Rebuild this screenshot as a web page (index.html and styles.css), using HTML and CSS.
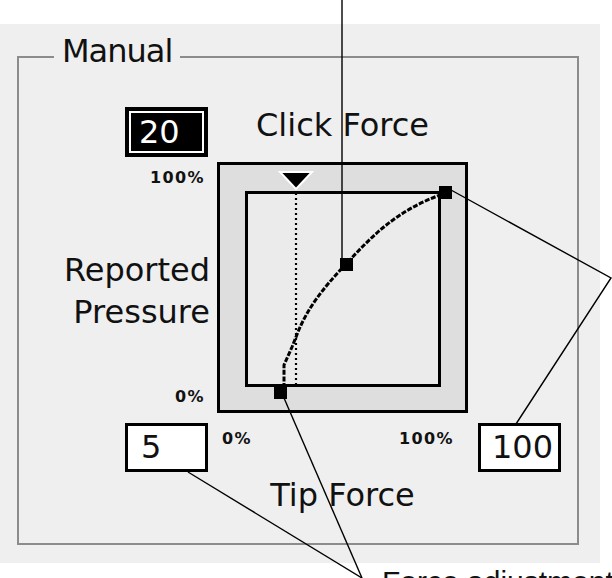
FILE: index.html
```html
<!DOCTYPE html>
<html lang="en">
<head>
<meta charset="utf-8">
<title>Tip Feel – Manual</title>
<link rel="stylesheet" href="styles.css">
</head>
<body>
<div class="panel">
  <fieldset class="group">
    <legend class="group-title">Manual</legend>
    <div class="layout">
      <div class="field field-click">20</div>
      <div class="axis-title axis-click">Click Force</div>

      <div class="y-axis">
        <span class="tick">100%</span>
        <span class="y-title">Reported<br>Pressure</span>
        <span class="tick">0%</span>
      </div>

      <svg class="graph" width="251" height="251" viewBox="0 0 251 251">
        <!-- outer well -->
        <rect x="1.5" y="1.5" width="248" height="248" fill="#dedede" stroke="#000" stroke-width="3"/>
        <!-- plot area -->
        <rect x="29.5" y="30.5" width="193" height="193" fill="#ebebeb" stroke="#000" stroke-width="3"/>
        <!-- click threshold marker -->
        <line x1="79" y1="31" x2="79" y2="223" stroke="#000" stroke-width="2.2" stroke-dasharray="2 3"/>
        <polygon points="63,10 95,10 79,27" fill="#000" stroke="#fff" stroke-width="2" stroke-linejoin="miter"/>
        <!-- pressure curve -->
        <path d="M67,226 L67,203 L75,185 L81,170 C 90,148 104,128 129,102 C 155,74 180,48 226,32"
              fill="none" stroke="#000" stroke-width="3" stroke-dasharray="5 1.6"/>
        <!-- handles -->
        <rect x="57" y="224" width="13" height="13" fill="#000"/>
        <rect x="123" y="96" width="13" height="13" fill="#000"/>
        <rect x="222" y="24" width="13" height="13" fill="#000"/>
      </svg>

      <div class="field field-min">5</div>
      <div class="x-ticks">
        <span class="tick">0%</span>
        <span class="tick">100%</span>
      </div>
      <div class="field field-max">100</div>

      <div class="axis-title axis-tip">Tip Force</div>
    </div>
  </fieldset>
</div>

<p class="caption">Force adjustment points of</p>

<svg class="callouts" width="612" height="578" viewBox="0 0 612 578">
  <g fill="none" stroke="#000" stroke-width="1.4">
    <line x1="342" y1="0" x2="342" y2="258"/>
    <polyline points="451,190 611,278 516,424"/>
    <line x1="188" y1="472" x2="362" y2="578"/>
    <line x1="284" y1="398" x2="362" y2="578"/>
  </g>
</svg>
</body>
</html>
```

FILE: styles.css
```css
html, body {
  margin: 0;
  padding: 0;
  background: #fff;
}

body {
  position: relative;
  width: 612px;
  height: 578px;
  overflow: hidden;
  font-family: "DejaVu Sans", "Liberation Sans", sans-serif;
  color: #111;
}

/* control panel background */
.panel {
  margin-top: 24px;
  width: 600px;
  height: 539px;
  box-sizing: border-box;
  padding: 11px 0 0 17px;
  background: #efefef;
}

/* group box */
.group {
  margin: 0;
  width: 562px;
  height: 510px;
  box-sizing: border-box;
  padding: 28px 0 0 0;
  border: 2px solid #8c8c8c;
  min-inline-size: 0;
}

.group-title {
  margin-left: 35px;
  padding: 0 8px 12px 8px;
  font-size: 32px;
  line-height: 32px;
  letter-spacing: -1px;
}

/* main grid: labels | graph | max field */
.layout {
  display: grid;
  grid-template-columns: 198px 251px 98px;
  grid-template-rows: 55px 251px 59px auto;
}

.field {
  box-sizing: border-box;
  width: 83px;
  height: 49px;
  border: 3px solid #000;
  background: #fff;
  font-size: 32px;
  line-height: 43px;
  padding-left: 11px;
  align-self: start;
}

.field-click {
  grid-column: 1;
  grid-row: 1;
  justify-self: end;
  margin-right: 9px;
  height: 50px;
  border-width: 4px;
  background: #000;
  color: #fff;
  box-shadow: inset 0 0 0 2px #fff;
  line-height: 42px;
  padding-left: 10px;
}

.field-min {
  grid-column: 1;
  grid-row: 3;
  justify-self: end;
  margin: 10px 9px 0 0;
  padding-left: 13px;
}

.field-max {
  grid-column: 3;
  grid-row: 3;
  margin: 10px 0 0 10px;
}

.axis-title {
  grid-column: 2;
  justify-self: center;
  font-size: 32px;
  line-height: 32px;
  white-space: nowrap;
}

.axis-click {
  grid-row: 1;
  margin-top: 2px;
}

.axis-tip {
  grid-row: 4;
  margin-top: 7px;
}

.graph {
  grid-column: 2;
  grid-row: 2;
  display: block;
}

.y-axis {
  grid-column: 1;
  grid-row: 2;
  display: flex;
  flex-direction: column;
  align-items: flex-end;
  justify-content: space-between;
  padding: 8px 12px 8px 0;
}

.y-title {
  margin-right: -5px;
  margin-top: 6px;
  font-size: 32px;
  line-height: 42px;
  text-align: right;
}

.tick {
  font-size: 16px;
  line-height: 16px;
  font-weight: bold;
  letter-spacing: 1.4px;
}

.x-ticks {
  grid-column: 2;
  grid-row: 3;
  display: flex;
  justify-content: space-between;
  align-self: start;
  margin-top: 18px;
  padding: 0 14px 0 5px;
}

/* annotation text below the panel, running off the bottom edge */
.caption {
  margin: 4px 0 0 382px;
  font-family: "Liberation Sans", Arial, sans-serif;
  font-size: 30px;
  line-height: 30px;
  white-space: nowrap;
}

/* annotation leader lines */
.callouts {
  position: absolute;
  left: 0;
  top: 0;
  pointer-events: none;
}
```
